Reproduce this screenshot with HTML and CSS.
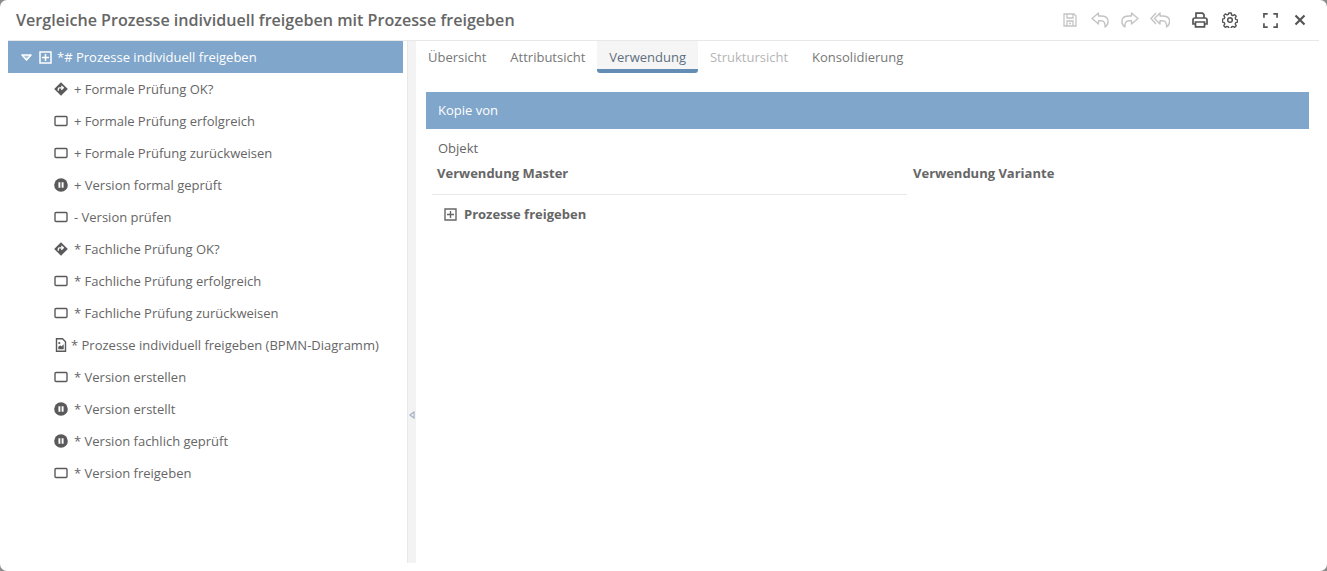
FILE: index.html
```html
<!DOCTYPE html>
<html lang="en">
<head>
    <meta charset="UTF-8">
    <title>Vergleiche Prozesse</title>
    <link rel="stylesheet" href="styles.css">
</head>
<body>
    <svg class="defs" width="0" height="0">
        <symbol id="task" viewBox="0 0 14 14"><rect x="1" y="2.500" width="12" height="9" rx="1" fill="none" stroke="currentColor" stroke-width="1.400"/></symbol>
        <symbol id="gate" viewBox="0 0 14 14"><path d="M7 .2 13.800 7 7 13.800 .2 7z" fill="currentColor"/><path d="M4.300 8.800V7q0-1.200 1.200-1.200h3.500M7.300 3.900 9.300 5.800 7.300 7.700" fill="none" stroke="#fff" stroke-width="1.300"/></symbol>
        <symbol id="event" viewBox="0 0 14 14"><circle cx="7" cy="7" r="6.800" fill="currentColor"/><path d="M5.400 4.300v5.400M8.600 4.300v5.400" stroke="#fff" stroke-width="1.900"/></symbol>
        <symbol id="doc" viewBox="0 0 14 14"><path d="M2.500 .8h6l3 3v9.400h-9z" fill="none" stroke="currentColor" stroke-width="1.400"/><path d="M4.300 11.300V8.700l2-1.500 1 1.300 2.400-2.300v5.100z" fill="currentColor"/><circle cx="5.300" cy="5" r="1.100" fill="currentColor"/></symbol>
    </svg>

    <div class="dialog">
        <div class="header">
            <h1>Vergleiche Prozesse individuell freigeben mit Prozesse freigeben</h1>
            <div class="tools">
                <svg class="tool save off" viewBox="0 0 14 14"><path d="M1 1h10l2 2v10H1zM4 1v4h6V1M4 13V8h6v5" fill="none" stroke="currentColor" stroke-width="1.300"/><circle cx="7" cy="10.500" r="1" fill="currentColor"/></svg>
                <svg class="tool undo off" viewBox="0 0 18 16"><path d="M7.500 1 1 6.500 7.500 12V8.800h2.500q4.500 0 4 6.200 3.500-2 3-6.500Q16.500 4 10 4H7.500z" fill="none" stroke="currentColor" stroke-width="1.400" stroke-linejoin="round"/></svg>
                <svg class="tool redo off" viewBox="0 0 18 16"><path d="M10.500 1 17 6.500 10.500 12V8.800H8q-4.500 0-4 6.200-3.500-2-3-6.500Q1.500 4 8 4h2.500z" fill="none" stroke="currentColor" stroke-width="1.400" stroke-linejoin="round"/></svg>
                <svg class="tool undo-all off" viewBox="0 0 20 16"><path d="M6 1 1 6.500 6 12M10 1 4.500 6.500 10 12V8.800h2.500q4.500 0 4 6.200 3.500-2 3-6.500Q19 4 12.500 4H10z" fill="none" stroke="currentColor" stroke-width="1.400" stroke-linejoin="round"/></svg>
                <svg class="tool print" viewBox="0 0 16 16"><path d="M4 6V1.200h6.500L12 2.700V6M3.500 12H1V8q0-2 2-2h10q2 0 2 2v4h-2.500M3.500 10h9v4.800h-9z" fill="none" stroke="currentColor" stroke-width="1.700"/></svg>
                <svg class="tool gear" viewBox="0 0 16 16"><circle cx="8" cy="8" r="2.300" fill="none" stroke="currentColor" stroke-width="1.500"/><path d="M6.800 1h2.400l.4 2 1.300.6 1.800-1 1.500 1.700-1 1.700.5 1.300 1.800.6v2.200l-1.800.6-.5 1.300 1 1.700-1.500 1.700-1.800-1-1.300.6-.4 1.500H6.800l-.4-1.500-1.300-.6-1.800 1-1.500-1.700 1-1.700-.5-1.300-1.800-.6V7.200l1.800-.6.500-1.300-1-1.700 1.500-1.700 1.800 1 1.300-.6z" fill="none" stroke="currentColor" stroke-width="1.400" stroke-linejoin="round"/></svg>
                <svg class="tool full" viewBox="0 0 16 16"><path d="M1 5V1h4M11 1h4v4M15 11v4h-4M5 15H1v-4" fill="none" stroke="currentColor" stroke-width="1.800"/></svg>
                <svg class="tool close" viewBox="0 0 12 12"><path d="M1.500 1.500l9 9M10.500 1.500l-9 9" fill="none" stroke="currentColor" stroke-width="2.200"/></svg>
            </div>
        </div>

        <div class="content">
            <!-- Tree -->
            <div class="tree">
                <div class="tree-root">
                    <svg class="arrow" viewBox="0 0 11 7"><path d="M1 1h9L5.500 6z" fill="#a9c3dc" stroke="white" stroke-width="1.600" stroke-linejoin="round"/></svg>
                    <svg class="plus" viewBox="0 0 13 13"><path d="M1 1h11v11H1zM6.500 3v7M3 6.500h7" fill="none" stroke="currentColor" stroke-width="1.500"/></svg>
                    <span>*# Prozesse individuell freigeben</span>
                </div>
                <div class="tree-row"><svg class="node"><use href="#gate"/></svg><span>+ Formale Prüfung OK?</span></div>
                <div class="tree-row"><svg class="node"><use href="#task"/></svg><span>+ Formale Prüfung erfolgreich</span></div>
                <div class="tree-row"><svg class="node"><use href="#task"/></svg><span>+ Formale Prüfung zurückweisen</span></div>
                <div class="tree-row"><svg class="node"><use href="#event"/></svg><span>+ Version formal geprüft</span></div>
                <div class="tree-row"><svg class="node"><use href="#task"/></svg><span>- Version prüfen</span></div>
                <div class="tree-row"><svg class="node"><use href="#gate"/></svg><span>* Fachliche Prüfung OK?</span></div>
                <div class="tree-row"><svg class="node"><use href="#task"/></svg><span>* Fachliche Prüfung erfolgreich</span></div>
                <div class="tree-row"><svg class="node"><use href="#task"/></svg><span>* Fachliche Prüfung zurückweisen</span></div>
                <div class="tree-row doc"><svg class="node"><use href="#doc"/></svg><span>* Prozesse individuell freigeben (BPMN-Diagramm)</span></div>
                <div class="tree-row"><svg class="node"><use href="#task"/></svg><span>* Version erstellen</span></div>
                <div class="tree-row"><svg class="node"><use href="#event"/></svg><span>* Version erstellt</span></div>
                <div class="tree-row"><svg class="node"><use href="#event"/></svg><span>* Version fachlich geprüft</span></div>
                <div class="tree-row"><svg class="node"><use href="#task"/></svg><span>* Version freigeben</span></div>
            </div>

            <div class="splitter">
                <svg class="grip" viewBox="0 0 6 8"><path d="M5 1 1 4l4 3z" fill="#f3f3f3" stroke="#a3b3c4" stroke-width="1.200"/></svg>
            </div>

            <!-- Detail -->
            <div class="detail">
                <div class="tabs">
                    <div class="tab">Übersicht</div>
                    <div class="tab">Attributsicht</div>
                    <div class="tab active">Verwendung</div>
                    <div class="tab disabled">Struktursicht</div>
                    <div class="tab">Konsolidierung</div>
                </div>
                <div class="band">Kopie von</div>
                <div class="object-label">Objekt</div>
                <div class="usage">
                    <div class="usage-col">
                        <div class="usage-head">Verwendung Master</div>
                        <div class="usage-item">
                            <svg class="plus" viewBox="0 0 13 13"><path d="M1 1h11v11H1zM6.500 3v7M3 6.500h7" fill="none" stroke="currentColor" stroke-width="1.400"/></svg>
                            <span>Prozesse freigeben</span>
                        </div>
                    </div>
                    <div class="usage-col">
                        <div class="usage-head plain">Verwendung Variante</div>
                    </div>
                </div>
            </div>
        </div>
    </div>
</body>
</html>
```

FILE: styles.css
```css
* {
    margin: 0;
    padding: 0;
    box-sizing: border-box;
    font-family: "Open Sans", "Liberation Sans", sans-serif;
}
html, body {
    height: 571px;
    overflow: hidden;
}
body {
    background: #8c8c8c;
}
.defs {
    position: absolute;
}
.dialog {
    height: 571px;
    background: white;
    border-radius: 7px;
    color: #666;
    font-size: 13px;
    overflow: hidden;
}
.header {
    height: 41px;
    margin: 0 8px;
    padding-left: 8px;
    border-bottom: 1px solid #e8e8e8;
    display: flex;
    align-items: center;
    justify-content: space-between;
}
.header h1 {
    font-size: 16.1px;
    font-weight: 600;
    color: #666;
}
.tools {
    display: flex;
    align-items: center;
    padding-right: 13px;
    color: #555;
}
.tool {
    height: 16px;
    width: 16px;
    flex: none;
}
.tool.off {
    color: #c4c4c4;
}
.save {
    width: 14px;
    height: 14px;
}
.undo {
    width: 18px;
    margin-left: 14px;
}
.redo {
    width: 18px;
    margin-left: 12px;
}
.undo-all {
    width: 20px;
    margin-left: 11px;
}
.print {
    margin-left: 22px;
}
.gear {
    margin-left: 14px;
}
.full {
    width: 15px;
    height: 15px;
    margin-left: 25px;
}
.close {
    width: 12px;
    height: 12px;
    margin-left: 16px;
}
.content {
    display: flex;
    height: 522px;
    padding-left: 8px;
}
.tree {
    flex: none;
    width: 395px;
    margin-right: 4px;
}
.tree-root {
    height: 32px;
    background: #80a6cb;
    color: white;
    display: flex;
    align-items: center;
    padding-left: 13px;
}
.arrow {
    width: 11px;
    height: 7px;
    margin-right: 7px;
    flex: none;
}
.plus {
    width: 13px;
    height: 13px;
    flex: none;
}
.tree-root .plus {
    margin-right: 5px;
}
.tree-row {
    height: 32px;
    display: flex;
    align-items: center;
    padding-left: 46px;
}
.node {
    width: 14px;
    height: 14px;
    margin-right: 6px;
    flex: none;
    color: #5a5a5a;
}
.tree-row.doc .node {
    margin-right: 3px;
}
.splitter {
    flex: none;
    width: 9px;
    padding: 370px 0 0 1px;
    background: #f3f3f3;
    border-left: 1px solid #e8e8e8;
}
.grip {
    display: block;
    width: 6px;
    height: 8px;
}
.detail {
    flex: 1;
    min-width: 0;
    padding: 0 18px 0 10px;
}
.tabs {
    display: flex;
    height: 32px;
    margin: 0 0 19px -10px;
}
.tab {
    padding: 0 12px;
    line-height: 32px;
    color: #777;
}
.tab.active {
    background: #f5f5f5;
    border-bottom: 4px solid #648db5;
    border-radius: 0 0 3px 3px;
    color: #5d6f80;
}
.tab.disabled {
    color: #b5b5b5;
}
.band {
    height: 37px;
    line-height: 37px;
    padding-left: 12px;
    background: #80a6cb;
    color: white;
}
.object-label {
    margin-top: 10px;
    padding-left: 12px;
    line-height: 18px;
}
.usage {
    display: flex;
    padding-left: 6px;
}
.usage-col {
    width: 475px;
    flex: none;
}
.usage-col + .usage-col {
    width: 396px;
    margin-left: 6px;
}
.usage-head {
    height: 31px;
    margin-top: 7px;
    padding-left: 5px;
    line-height: 18px;
    font-weight: 700;
    border-bottom: 1px solid #e8e8e8;
}
.usage-head.plain {
    border-bottom: none;
    padding-left: 0;
}
.usage-item {
    display: flex;
    align-items: center;
    height: 38px;
    padding-left: 12px;
    font-weight: 700;
}
.usage-item .plus {
    margin-right: 7px;
}
```
